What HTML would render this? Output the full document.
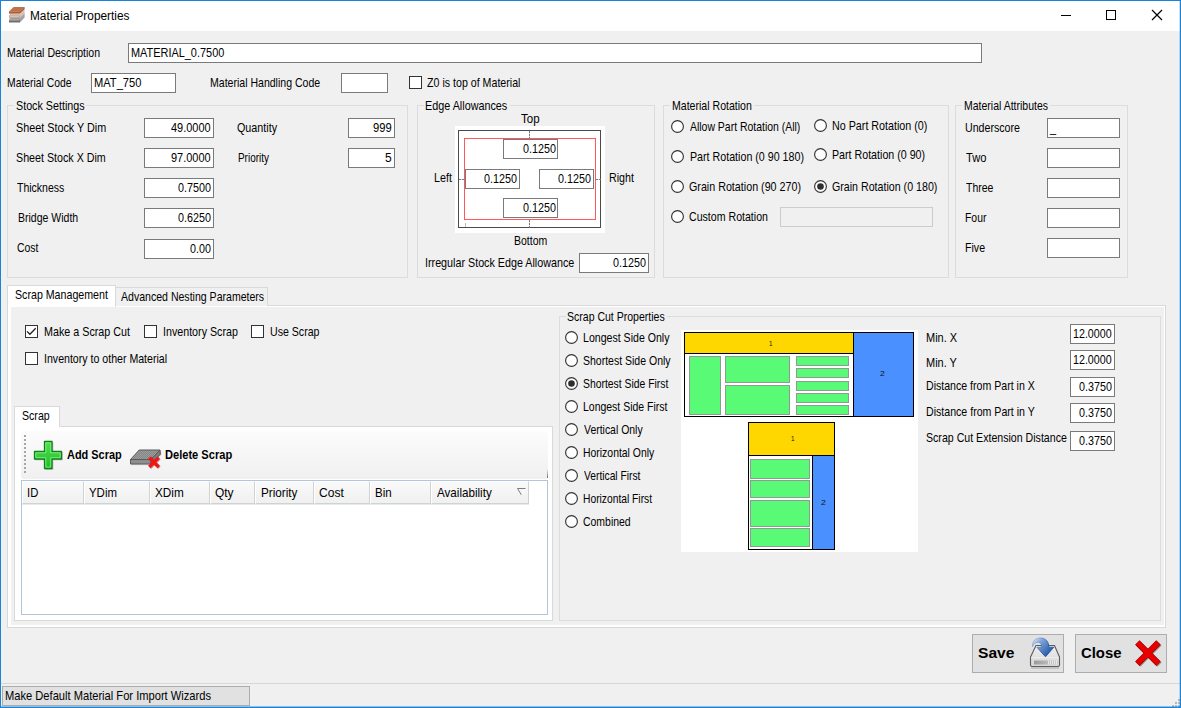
<!DOCTYPE html>
<html><head><meta charset="utf-8"><title>Material Properties</title>
<style>
html,body{margin:0;padding:0}
body{width:1181px;height:708px;overflow:hidden;background:#f0f0f0;position:relative;font-family:'Liberation Sans',sans-serif}
.t{position:absolute;white-space:pre;transform-origin:0 0;color:#000}
.tb{position:absolute;box-sizing:border-box;background:#fff;border:1px solid #7a7a7a}
.tbd{position:absolute;box-sizing:border-box;background:#f0f0f0;border:1px solid #ccc}
.gb{position:absolute;box-sizing:border-box;border:1px solid #dcdcdc}
.gap{position:absolute;background:#f0f0f0}
.rs{position:absolute}
.cb{position:absolute;box-sizing:border-box;width:13px;height:13px;border:1px solid #333;background:#fff}
.pane{position:absolute;box-sizing:border-box;border:1px solid #d9d9d9;background:#fff}
.page{position:absolute;background:#f0f0f0}
.tab{position:absolute;box-sizing:border-box;border:1px solid #d9d9d9;border-bottom:none;background:#f0f0f0}
.tab.act{background:#fff}
.tool{position:absolute;background:linear-gradient(#fcfcfc,#f0f0f0);border-radius:3px}
.grip{position:absolute;width:2px;height:38px;background:repeating-linear-gradient(#a6a6a6 0,#a6a6a6 2px,transparent 2px,transparent 4px)}
.grid{position:absolute;box-sizing:border-box;border:1px solid #b3c5da;background:#fff}
.hd{position:absolute;box-sizing:border-box;background:linear-gradient(#f9f9f9,#f0f0f0);border-right:1px solid #d2d2d2;border-bottom:1px solid #cfd3d3;border-left:1px solid #fff;border-top:1px solid #fdfdfd;box-shadow:0 1px 0 #e4e9ea}
.btn{position:absolute;box-sizing:border-box;background:#e1e1e1;border:1px solid #adadad}
</style></head>
<body>
<div id="w0" style="position:absolute;left:0;top:0;width:1181px;height:708px;background:#f0f0f0"></div>
<div style="position:absolute;left:0;top:0;width:1181px;height:31px;background:#fff"></div>
<div class="tb" style="left:128px;top:43px;width:854px;height:20px;"></div>
<div class="tb" style="left:91px;top:73px;width:85px;height:20px;"></div>
<div class="tb" style="left:341px;top:73px;width:47px;height:20px;"></div>
<div class="cb" style="left:409px;top:76px"></div>
<div class="gb" style="left:7px;top:105px;width:401px;height:173px"></div>
<div class="gap" style="left:14px;top:105px;width:72px;height:1px"></div>
<div class="gb" style="left:417px;top:105px;width:238px;height:173px"></div>
<div class="gap" style="left:424px;top:105px;width:86px;height:1px"></div>
<div class="gb" style="left:663px;top:105px;width:286px;height:173px"></div>
<div class="gap" style="left:670px;top:105px;width:84px;height:1px"></div>
<div class="gb" style="left:955px;top:105px;width:173px;height:173px"></div>
<div class="gap" style="left:962px;top:105px;width:88px;height:1px"></div>
<div class="tb" style="left:144px;top:118px;width:70px;height:20px;"></div>
<div class="tb" style="left:144px;top:148px;width:70px;height:20px;"></div>
<div class="tb" style="left:144px;top:178px;width:70px;height:20px;"></div>
<div class="tb" style="left:144px;top:208px;width:70px;height:20px;"></div>
<div class="tb" style="left:144px;top:239px;width:70px;height:20px;"></div>
<div class="tb" style="left:348px;top:118px;width:47px;height:20px;"></div>
<div class="tb" style="left:348px;top:148px;width:47px;height:20px;"></div>
<div style="position:absolute;left:455px;top:126px;width:150px;height:107px;background:#fff"></div>
<div style="position:absolute;left:458px;top:130px;width:143px;height:98px;border:1px solid #4a4a4a;box-sizing:border-box"></div>
<div style="position:absolute;left:464px;top:138px;width:132px;height:82px;border:1px solid #ff5a5a;box-sizing:border-box"></div>
<div style="position:absolute;left:529px;top:131px;width:1px;height:7px;background:repeating-linear-gradient(#777 0,#777 2px,#ddd 2px,#ddd 3px)"></div>
<div style="position:absolute;left:529px;top:220px;width:1px;height:8px;background:repeating-linear-gradient(#777 0,#777 2px,#ddd 2px,#ddd 3px)"></div>
<div style="position:absolute;left:459px;top:179px;width:5px;height:1px;background:repeating-linear-gradient(90deg,#777 0,#777 2px,#ddd 2px,#ddd 3px)"></div>
<div style="position:absolute;left:596px;top:179px;width:5px;height:1px;background:repeating-linear-gradient(90deg,#777 0,#777 2px,#ddd 2px,#ddd 3px)"></div>
<div style="position:absolute;left:465px;top:223px;width:1px;height:4px;background:#bbb"></div>
<div class="tb" style="left:503px;top:139px;width:55px;height:20px;"></div>
<div class="tb" style="left:465px;top:169px;width:55px;height:20px;"></div>
<div class="tb" style="left:539px;top:169px;width:55px;height:20px;"></div>
<div class="tb" style="left:503px;top:198px;width:55px;height:20px;"></div>
<div class="tb" style="left:579px;top:253px;width:70px;height:20px;"></div>
<svg class="rs" style="left:671px;top:120px" width="13" height="13" viewBox="0 0 13 13"><circle cx="6.5" cy="6.5" r="5.9" fill="#fff" stroke="#333" stroke-width="1.15"/></svg>
<svg class="rs" style="left:671px;top:150px" width="13" height="13" viewBox="0 0 13 13"><circle cx="6.5" cy="6.5" r="5.9" fill="#fff" stroke="#333" stroke-width="1.15"/></svg>
<svg class="rs" style="left:671px;top:180px" width="13" height="13" viewBox="0 0 13 13"><circle cx="6.5" cy="6.5" r="5.9" fill="#fff" stroke="#333" stroke-width="1.15"/></svg>
<svg class="rs" style="left:671px;top:210px" width="13" height="13" viewBox="0 0 13 13"><circle cx="6.5" cy="6.5" r="5.9" fill="#fff" stroke="#333" stroke-width="1.15"/></svg>
<svg class="rs" style="left:814px;top:119px" width="13" height="13" viewBox="0 0 13 13"><circle cx="6.5" cy="6.5" r="5.9" fill="#fff" stroke="#333" stroke-width="1.15"/></svg>
<svg class="rs" style="left:814px;top:148px" width="13" height="13" viewBox="0 0 13 13"><circle cx="6.5" cy="6.5" r="5.9" fill="#fff" stroke="#333" stroke-width="1.15"/></svg>
<svg class="rs" style="left:814px;top:180px" width="13" height="13" viewBox="0 0 13 13"><circle cx="6.5" cy="6.5" r="5.9" fill="#fff" stroke="#333" stroke-width="1.15"/><circle cx="6.5" cy="6.5" r="3.3" fill="#2e2e2e"/></svg>
<div class="tbd" style="left:780px;top:207px;width:153px;height:20px;"></div>
<div class="tb" style="left:1047px;top:118px;width:73px;height:20px;"></div>
<div class="tb" style="left:1047px;top:148px;width:73px;height:20px;"></div>
<div class="tb" style="left:1047px;top:178px;width:73px;height:20px;"></div>
<div class="tb" style="left:1047px;top:208px;width:73px;height:20px;"></div>
<div class="tb" style="left:1047px;top:238px;width:73px;height:20px;"></div>
<div class="pane" style="left:7px;top:305px;width:1159px;height:323px"></div>
<div class="page" style="left:11px;top:307px;width:1153px;height:318px"></div>
<div class="tab" style="left:115px;top:287px;width:153px;height:19px"></div>
<div class="tab act" style="left:7px;top:285px;width:109px;height:22px"></div>
<div class="cb" style="left:25px;top:325px"><svg width="13" height="13" viewBox="0 0 13 13" style="position:absolute;left:-1px;top:-1px"><path d="M2.0 6.4 L4.9 9.3 L10.7 3.2" fill="none" stroke="#222" stroke-width="1.3"/></svg></div>
<div class="cb" style="left:144px;top:325px"></div>
<div class="cb" style="left:251px;top:325px"></div>
<div class="cb" style="left:25px;top:352px"></div>
<div class="pane" style="left:14px;top:426px;width:539px;height:195px"></div>
<div class="tab act" style="left:14px;top:406px;width:46px;height:21px"></div>
<div class="tool" style="left:21px;top:431px;width:527px;height:48px"></div>
<div style="position:absolute;left:547px;top:469px;width:1px;height:9px;background:linear-gradient(rgba(90,90,90,0),rgba(90,90,90,.9))"></div>
<div class="grip" style="left:24px;top:435px"></div>
<div class="grid" style="left:21px;top:480px;width:527px;height:135px"></div>
<div class="hd" style="left:22px;top:481px;width:62px;height:23px"></div>
<div class="hd" style="left:84px;top:481px;width:66px;height:23px"></div>
<div class="hd" style="left:150px;top:481px;width:60px;height:23px"></div>
<div class="hd" style="left:210px;top:481px;width:45px;height:23px"></div>
<div class="hd" style="left:255px;top:481px;width:59px;height:23px"></div>
<div class="hd" style="left:314px;top:481px;width:56px;height:23px"></div>
<div class="hd" style="left:370px;top:481px;width:61px;height:23px"></div>
<div class="hd" style="left:431px;top:481px;width:98px;height:23px"></div>
<svg style="position:absolute;left:517px;top:488px" width="9" height="8" viewBox="0 0 9 8"><path d="M8.5 0.5 L4.5 7" fill="none" stroke="#fff" stroke-width="1"/><path d="M8.5 0.5 H0.5 L4.3 6.8" fill="none" stroke="#7d7d7d" stroke-width="1"/></svg>
<div class="gb" style="left:559px;top:316px;width:602px;height:305px"></div>
<div class="gap" style="left:566px;top:316px;width:101px;height:1px"></div>
<svg class="rs" style="left:565px;top:331px" width="13" height="13" viewBox="0 0 13 13"><circle cx="6.5" cy="6.5" r="5.9" fill="#fff" stroke="#333" stroke-width="1.15"/></svg>
<svg class="rs" style="left:565px;top:354px" width="13" height="13" viewBox="0 0 13 13"><circle cx="6.5" cy="6.5" r="5.9" fill="#fff" stroke="#333" stroke-width="1.15"/></svg>
<svg class="rs" style="left:565px;top:377px" width="13" height="13" viewBox="0 0 13 13"><circle cx="6.5" cy="6.5" r="5.9" fill="#fff" stroke="#333" stroke-width="1.15"/><circle cx="6.5" cy="6.5" r="3.3" fill="#2e2e2e"/></svg>
<svg class="rs" style="left:565px;top:400px" width="13" height="13" viewBox="0 0 13 13"><circle cx="6.5" cy="6.5" r="5.9" fill="#fff" stroke="#333" stroke-width="1.15"/></svg>
<svg class="rs" style="left:565px;top:423px" width="13" height="13" viewBox="0 0 13 13"><circle cx="6.5" cy="6.5" r="5.9" fill="#fff" stroke="#333" stroke-width="1.15"/></svg>
<svg class="rs" style="left:565px;top:446px" width="13" height="13" viewBox="0 0 13 13"><circle cx="6.5" cy="6.5" r="5.9" fill="#fff" stroke="#333" stroke-width="1.15"/></svg>
<svg class="rs" style="left:565px;top:469px" width="13" height="13" viewBox="0 0 13 13"><circle cx="6.5" cy="6.5" r="5.9" fill="#fff" stroke="#333" stroke-width="1.15"/></svg>
<svg class="rs" style="left:565px;top:492px" width="13" height="13" viewBox="0 0 13 13"><circle cx="6.5" cy="6.5" r="5.9" fill="#fff" stroke="#333" stroke-width="1.15"/></svg>
<svg class="rs" style="left:565px;top:515px" width="13" height="13" viewBox="0 0 13 13"><circle cx="6.5" cy="6.5" r="5.9" fill="#fff" stroke="#333" stroke-width="1.15"/></svg>
<div class="tb" style="left:1070px;top:324px;width:45px;height:20px;"></div>
<div class="tb" style="left:1070px;top:350px;width:45px;height:20px;"></div>
<div class="tb" style="left:1070px;top:377px;width:45px;height:20px;"></div>
<div class="tb" style="left:1070px;top:403px;width:45px;height:20px;"></div>
<div class="tb" style="left:1070px;top:431px;width:45px;height:20px;"></div>
<svg style="position:absolute;left:681px;top:330px" width="237" height="222" viewBox="0 0 237 222"><rect width="237" height="222" fill="#fff"/><rect x="3.5" y="2.5" width="229" height="84" fill="#fff" stroke="#000" stroke-width="1"/><rect x="3.5" y="2.5" width="169" height="21" fill="#ffd700" stroke="#000" stroke-width="1"/><rect x="172.5" y="2.5" width="60" height="84" fill="#4a90ff" stroke="#000" stroke-width="1"/><rect x="8.5" y="26.5" width="31" height="58" fill="#59fb76" stroke="#8f9a92" stroke-width="1"/><rect x="44.5" y="26.5" width="64" height="26" fill="#59fb76" stroke="#8f9a92" stroke-width="1"/><rect x="44.5" y="55.5" width="64" height="29" fill="#59fb76" stroke="#8f9a92" stroke-width="1"/><rect x="115.5" y="26.5" width="52" height="9" fill="#59fb76" stroke="#8f9a92" stroke-width="1"/><rect x="115.5" y="38.5" width="52" height="9" fill="#59fb76" stroke="#8f9a92" stroke-width="1"/><rect x="115.5" y="51.5" width="52" height="9" fill="#59fb76" stroke="#8f9a92" stroke-width="1"/><rect x="115.5" y="63.5" width="52" height="9" fill="#59fb76" stroke="#8f9a92" stroke-width="1"/><rect x="115.5" y="75.5" width="52" height="9" fill="#59fb76" stroke="#8f9a92" stroke-width="1"/><rect x="67.5" y="92.5" width="86" height="127" fill="#fff" stroke="#000" stroke-width="1"/><rect x="67.5" y="92.5" width="86" height="33" fill="#ffd700" stroke="#000" stroke-width="1"/><rect x="131.5" y="125.5" width="22" height="94" fill="#4a90ff" stroke="#000" stroke-width="1"/><rect x="69.5" y="129.5" width="59" height="19" fill="#59fb76" stroke="#8f9a92" stroke-width="1"/><rect x="69.5" y="150.5" width="59" height="17" fill="#59fb76" stroke="#8f9a92" stroke-width="1"/><rect x="69.5" y="170.5" width="59" height="26" fill="#59fb76" stroke="#8f9a92" stroke-width="1"/><rect x="69.5" y="198.5" width="59" height="18" fill="#59fb76" stroke="#8f9a92" stroke-width="1"/></svg>
<div class="btn" style="left:972px;top:634px;width:92px;height:39px"></div><div class="btn" style="left:1075px;top:634px;width:92px;height:39px"></div>
<div style="position:absolute;left:1px;top:683px;width:1179px;height:1px;background:#d7d7d7"></div><div class="btn" style="left:2px;top:686px;width:248px;height:20px"></div>
<div style="position:absolute;left:1178px;top:699px;width:2px;height:2px;background:#b8b8b8"></div>
<div style="position:absolute;left:1175px;top:702px;width:2px;height:2px;background:#b8b8b8"></div>
<div style="position:absolute;left:1178px;top:702px;width:2px;height:2px;background:#b8b8b8"></div>
<div style="position:absolute;left:1172px;top:705px;width:2px;height:2px;background:#b8b8b8"></div>
<div style="position:absolute;left:1175px;top:705px;width:2px;height:2px;background:#b8b8b8"></div>
<div style="position:absolute;left:1178px;top:705px;width:2px;height:2px;background:#b8b8b8"></div>
<!-- title bar icon -->
<svg style="position:absolute;left:9px;top:7px" width="16" height="16" viewBox="0 0 16 16">
<polygon points="11,6.5 15.6,1.8 15.6,6.2 11,10.8" fill="#c8ad98" opacity=".72"/>
<polygon points="11,10.8 15.6,6.2 15.6,10.6 11,15.4" fill="#808080" opacity=".72"/>
<rect x="0.8" y="6.6" width="10.2" height="1.7" fill="#d6bfac"/>
<rect x="0" y="8.4" width="11" height="2.3" fill="#b39079"/>
<rect x="0.3" y="9" width="10" height="0.8" fill="#e2d0c2"/>
<rect x="0.8" y="10.8" width="10.2" height="1.7" fill="#9c9c9c"/>
<rect x="0" y="12.6" width="11" height="2.9" fill="#6f6f6f"/>
<rect x="0.3" y="13.2" width="10" height="0.8" fill="#999"/>
<polygon points="4.6,0 15.6,0 11,4.5 0,4.5" fill="#c0714a"/>
<rect x="0" y="4.4" width="11" height="2.2" fill="#ad5c37"/>
<polygon points="11,4.4 15.6,0 15.6,2 11,6.6" fill="#9e5532"/>
</svg>
<!-- title bar buttons -->
<div style="position:absolute;left:1061px;top:15px;width:10px;height:1px;background:#000"></div>
<div style="position:absolute;left:1106px;top:10px;width:10px;height:10px;box-sizing:border-box;border:1px solid #000"></div>
<svg style="position:absolute;left:1151px;top:9px" width="12" height="12" viewBox="0 0 12 12"><path d="M1 1 L11 11 M11 1 L1 11" stroke="#000" stroke-width="1.2" fill="none"/></svg>
<!-- add (green plus) -->
<svg style="position:absolute;left:33px;top:440px" width="30" height="30" viewBox="0 0 30 30">
<defs><linearGradient id="gp" x1="0" y1="0" x2="0" y2="1"><stop offset="0" stop-color="#4fe04f"/><stop offset="1" stop-color="#1fbd2a"/></linearGradient></defs>
<path d="M11.5 1.5 H19.5 V11.5 H29 V19.5 H19.5 V29 H11.5 V19.5 H1.5 V11.5 H11.5 Z" transform="translate(0.8,0.8)" fill="rgba(0,0,0,.25)"/>
<path d="M11.5 1.5 H19 V11.5 H28.5 V19 H19 V28.5 H11.5 V19 H1.5 V11.5 H11.5 Z" fill="url(#gp)" stroke="#0f7f18" stroke-width="1.3" stroke-linejoin="round"/>
<path d="M12.8 2.8 H17.7 V12.8 H27.2 V17.7 H17.7 V27.2 H12.8 V17.7 H2.8 V12.8 H12.8 Z" fill="none" stroke="#86ee86" stroke-width="1" opacity=".85"/>
</svg>
<!-- delete (slab + red x) -->
<svg style="position:absolute;left:129px;top:448px" width="34" height="24" viewBox="0 0 34 24">
<defs><pattern id="chk" width="2" height="2" patternUnits="userSpaceOnUse"><rect width="2" height="2" fill="#9c9c9c"/><rect width="1" height="1" fill="#868686"/><rect x="1" y="1" width="1" height="1" fill="#868686"/></pattern></defs>
<polygon points="10.5,2 31.5,2 31.5,6.5 22,16.5 1.5,16.5 1.5,11.5" fill="rgba(0,0,0,.12)" transform="translate(0.8,0.8)"/>
<polygon points="10.2,2 31,2 22,11.5 1.5,11.5" fill="url(#chk)" stroke="#5a5a5a" stroke-width="1" stroke-linejoin="round"/>
<polygon points="1.5,11.5 22,11.5 22,16 1.5,16" fill="#8e8e8e" stroke="#5a5a5a" stroke-width="1" stroke-linejoin="round"/>
<polygon points="22,11.5 31,2 31.4,6.2 22,16" fill="#7c7c7c" stroke="#5a5a5a" stroke-width="1" stroke-linejoin="round"/>
<path d="M20.3 9.6 L29.7 19 M29.7 9.6 L20.3 19" stroke="rgba(60,0,0,.35)" stroke-width="3.6" transform="translate(0.7,0.7)"/>
<path d="M20.3 9.6 L29.7 19 M29.7 9.6 L20.3 19" stroke="#f41414" stroke-width="3.4"/>
</svg>
<!-- save (drive + arrow) -->
<svg style="position:absolute;left:1028px;top:636px" width="34" height="34" viewBox="0 0 34 34">
<defs>
<linearGradient id="dv" x1="0" y1="0" x2="0" y2="1"><stop offset="0" stop-color="#efefef"/><stop offset="1" stop-color="#d6d6d6"/></linearGradient>
<linearGradient id="sl" x1="0" y1="0" x2="1" y2="0"><stop offset="0" stop-color="#9a9a9a"/><stop offset="1" stop-color="#cfcfcf"/></linearGradient>
<linearGradient id="ar" x1="0" y1="0.2" x2="0.75" y2="0.8"><stop offset="0" stop-color="#cfdcf0"/><stop offset="0.3" stop-color="#7fa6da"/><stop offset="1" stop-color="#2c5fae"/></linearGradient><linearGradient id="ars" x1="0" y1="0.2" x2="0.6" y2="0.6"><stop offset="0" stop-color="#9db8df"/><stop offset="1" stop-color="#28559c"/></linearGradient>
</defs>
<path d="M3 32 H31" stroke="rgba(0,0,0,.18)" stroke-width="1.5"/>
<path d="M8 9.5 H26.5 L31.5 21 V29 Q31.5 30.5 30 30.5 H4 Q2.5 30.5 2.5 29 V21 Z" fill="url(#dv)" stroke="#5c5c5c" stroke-width="1.1" stroke-linejoin="round"/>
<path d="M3.2 21.5 H30.8" stroke="#fff" stroke-width="1" opacity=".45"/>
<rect x="6" y="24.5" width="24" height="4" fill="url(#sl)"/>
<path d="M20.5 24.5 V28.5 M22.5 24.5 V28.5 M24.5 24.5 V28.5 M26.5 24.5 V28.5 M28.5 24.5 V28.5" stroke="#e8e8e8" stroke-width="1"/>
<path d="M4.5 10.5 C4 4 9 1.8 13 2 C18.5 2.3 20.8 6.5 20.8 11.2 H25.8 L17.5 20.8 L8.8 11.2 H13.8 C13.8 8 12.5 6.5 10.5 6.3 C7.5 6 5.5 8 4.5 10.5 Z" fill="url(#ar)" stroke="url(#ars)" stroke-width=".9" stroke-linejoin="round"/>
</svg>
<!-- close (red X) -->
<svg style="position:absolute;left:1133px;top:636px" width="32" height="32" viewBox="0 0 32 32">
<path d="M4.3 6.5 L25.5 27.7 M25.5 6.5 L4.3 27.7" stroke="rgba(40,40,40,.45)" stroke-width="6" transform="translate(0.9,0.9)"/>
<path d="M4.3 6.5 L25.5 27.7 M25.5 6.5 L4.3 27.7" stroke="#a00000" stroke-width="6.3"/>
<path d="M4.6 6.8 L25.2 27.4 M25.2 6.8 L4.6 27.4" stroke="#e80000" stroke-width="5.1"/>
</svg>

<span class="t" style="left:29.7px;top:9.8px;font-size:12px;line-height:12px;transform:scaleX(0.9877);">Material Properties</span>
<span class="t" style="left:6.7px;top:46.0px;font-size:13px;line-height:13px;transform:scaleX(0.8102);">Material Description</span>
<span class="t" style="left:130.6px;top:46.0px;font-size:13px;line-height:13px;transform:scaleX(0.8400);">MATERIAL_0.7500</span>
<span class="t" style="left:6.7px;top:76.0px;font-size:13px;line-height:13px;transform:scaleX(0.7966);">Material Code</span>
<span class="t" style="left:93.6px;top:76.0px;font-size:13px;line-height:13px;transform:scaleX(0.8550);">MAT_750</span>
<span class="t" style="left:209.5px;top:76.0px;font-size:13px;line-height:13px;transform:scaleX(0.8109);">Material Handling Code</span>
<span class="t" style="left:427.1px;top:76.0px;font-size:13px;line-height:13px;transform:scaleX(0.8188);">Z0 is top of Material</span>
<span class="t" style="left:15.6px;top:99.0px;font-size:13px;line-height:13px;transform:scaleX(0.8263);">Stock Settings</span>
<span class="t" style="left:15.5px;top:121.0px;font-size:13px;line-height:13px;transform:scaleX(0.8300);">Sheet Stock Y Dim</span>
<span class="t" style="left:16.4px;top:151.0px;font-size:13px;line-height:13px;transform:scaleX(0.8228);">Sheet Stock X Dim</span>
<span class="t" style="left:17.1px;top:181.0px;font-size:13px;line-height:13px;transform:scaleX(0.8072);">Thickness</span>
<span class="t" style="left:17.7px;top:211.0px;font-size:13px;line-height:13px;transform:scaleX(0.8086);">Bridge Width</span>
<span class="t" style="left:16.9px;top:241.0px;font-size:13px;line-height:13px;transform:scaleX(0.8032);">Cost</span>
<span class="t" style="left:171.2px;top:121.0px;font-size:13px;line-height:13px;transform:scaleX(0.8441);">49.0000</span>
<span class="t" style="left:171.2px;top:151.0px;font-size:13px;line-height:13px;transform:scaleX(0.8441);">97.0000</span>
<span class="t" style="left:177.9px;top:181.0px;font-size:13px;line-height:13px;transform:scaleX(0.8285);">0.7500</span>
<span class="t" style="left:177.9px;top:211.0px;font-size:13px;line-height:13px;transform:scaleX(0.8285);">0.6250</span>
<span class="t" style="left:189.9px;top:242.0px;font-size:13px;line-height:13px;transform:scaleX(0.8275);">0.00</span>
<span class="t" style="left:236.8px;top:121.0px;font-size:13px;line-height:13px;transform:scaleX(0.8276);">Quantity</span>
<span class="t" style="left:237.7px;top:151.0px;font-size:13px;line-height:13px;transform:scaleX(0.7632);">Priority</span>
<span class="t" style="left:373.2px;top:121.0px;font-size:13px;line-height:13px;transform:scaleX(0.8604);">999</span>
<span class="t" style="left:385.2px;top:151.0px;font-size:13px;line-height:13px;transform:scaleX(0.9225);">5</span>
<span class="t" style="left:425.4px;top:99.0px;font-size:13px;line-height:13px;transform:scaleX(0.8309);">Edge Allowances</span>
<span class="t" style="left:521.4px;top:112.0px;font-size:13px;line-height:13px;transform:scaleX(0.8845);">Top</span>
<span class="t" style="left:433.5px;top:171.0px;font-size:13px;line-height:13px;transform:scaleX(0.8242);">Left</span>
<span class="t" style="left:608.5px;top:171.0px;font-size:13px;line-height:13px;transform:scaleX(0.8193);">Right</span>
<span class="t" style="left:513.7px;top:234.0px;font-size:13px;line-height:13px;transform:scaleX(0.8079);">Bottom</span>
<span class="t" style="left:425.1px;top:256.0px;font-size:13px;line-height:13px;transform:scaleX(0.8263);">Irregular Stock Edge Allowance</span>
<span class="t" style="left:522.8px;top:142.0px;font-size:13px;line-height:13px;transform:scaleX(0.8285);">0.1250</span>
<span class="t" style="left:484.4px;top:172.0px;font-size:13px;line-height:13px;transform:scaleX(0.8285);">0.1250</span>
<span class="t" style="left:558.4px;top:172.0px;font-size:13px;line-height:13px;transform:scaleX(0.8285);">0.1250</span>
<span class="t" style="left:522.8px;top:201.0px;font-size:13px;line-height:13px;transform:scaleX(0.8285);">0.1250</span>
<span class="t" style="left:612.9px;top:256.0px;font-size:13px;line-height:13px;transform:scaleX(0.8285);">0.1250</span>
<span class="t" style="left:671.5px;top:99.0px;font-size:13px;line-height:13px;transform:scaleX(0.8127);">Material Rotation</span>
<span class="t" style="left:690.2px;top:120.0px;font-size:13px;line-height:13px;transform:scaleX(0.8038);">Allow Part Rotation (All)</span>
<span class="t" style="left:689.5px;top:150.0px;font-size:13px;line-height:13px;transform:scaleX(0.8214);">Part Rotation (0 90 180)</span>
<span class="t" style="left:688.6px;top:180.0px;font-size:13px;line-height:13px;transform:scaleX(0.8242);">Grain Rotation (90 270)</span>
<span class="t" style="left:688.6px;top:210.0px;font-size:13px;line-height:13px;transform:scaleX(0.8156);">Custom Rotation</span>
<span class="t" style="left:832.3px;top:119.0px;font-size:13px;line-height:13px;transform:scaleX(0.8250);">No Part Rotation (0)</span>
<span class="t" style="left:832.3px;top:148.0px;font-size:13px;line-height:13px;transform:scaleX(0.8204);">Part Rotation (0 90)</span>
<span class="t" style="left:831.7px;top:180.0px;font-size:13px;line-height:13px;transform:scaleX(0.8192);">Grain Rotation (0 180)</span>
<span class="t" style="left:963.8px;top:99.0px;font-size:13px;line-height:13px;transform:scaleX(0.8071);">Material Attributes</span>
<span class="t" style="left:965.4px;top:121.0px;font-size:13px;line-height:13px;transform:scaleX(0.8180);">Underscore</span>
<span class="t" style="left:966.1px;top:151.0px;font-size:13px;line-height:13px;transform:scaleX(0.8575);">Two</span>
<span class="t" style="left:966.1px;top:181.0px;font-size:13px;line-height:13px;transform:scaleX(0.8050);">Three</span>
<span class="t" style="left:965.4px;top:211.0px;font-size:13px;line-height:13px;transform:scaleX(0.7995);">Four</span>
<span class="t" style="left:965.4px;top:241.0px;font-size:13px;line-height:13px;transform:scaleX(0.8173);">Five</span>
<span class="t" style="left:1049.9px;top:121.0px;font-size:13px;line-height:13px;transform:scaleX(0.8396);">_</span>
<span class="t" style="left:14.9px;top:288.0px;font-size:13px;line-height:13px;transform:scaleX(0.8186);">Scrap Management</span>
<span class="t" style="left:120.8px;top:290.0px;font-size:13px;line-height:13px;transform:scaleX(0.8119);">Advanced Nesting Parameters</span>
<span class="t" style="left:43.6px;top:325.0px;font-size:13px;line-height:13px;transform:scaleX(0.8263);">Make a Scrap Cut</span>
<span class="t" style="left:162.5px;top:325.0px;font-size:13px;line-height:13px;transform:scaleX(0.8224);">Inventory Scrap</span>
<span class="t" style="left:269.7px;top:325.0px;font-size:13px;line-height:13px;transform:scaleX(0.8150);">Use Scrap</span>
<span class="t" style="left:43.6px;top:352.0px;font-size:13px;line-height:13px;transform:scaleX(0.8149);">Inventory to other Material</span>
<span class="t" style="left:21.5px;top:409.0px;font-size:13px;line-height:13px;transform:scaleX(0.8147);">Scrap</span>
<span class="t" style="left:67.2px;top:448.8px;font-size:12px;line-height:12px;transform:scaleX(0.9115);font-weight:bold;">Add Scrap</span>
<span class="t" style="left:164.8px;top:448.8px;font-size:12px;line-height:12px;transform:scaleX(0.9240);font-weight:bold;">Delete Scrap</span>
<span class="t" style="left:26.9px;top:486.0px;font-size:13px;line-height:13px;transform:scaleX(0.8672);">ID</span>
<span class="t" style="left:89.2px;top:486.0px;font-size:13px;line-height:13px;transform:scaleX(0.8793);">YDim</span>
<span class="t" style="left:154.5px;top:486.0px;font-size:13px;line-height:13px;transform:scaleX(0.9054);">XDim</span>
<span class="t" style="left:215.0px;top:486.0px;font-size:13px;line-height:13px;transform:scaleX(0.9179);">Qty</span>
<span class="t" style="left:260.5px;top:486.0px;font-size:13px;line-height:13px;transform:scaleX(0.9016);">Priority</span>
<span class="t" style="left:319.1px;top:486.0px;font-size:13px;line-height:13px;transform:scaleX(0.9267);">Cost</span>
<span class="t" style="left:375.4px;top:486.0px;font-size:13px;line-height:13px;transform:scaleX(0.8871);">Bin</span>
<span class="t" style="left:436.8px;top:486.0px;font-size:13px;line-height:13px;transform:scaleX(0.8947);">Availability</span>
<span class="t" style="left:567.2px;top:310.0px;font-size:13px;line-height:13px;transform:scaleX(0.8094);">Scrap Cut Properties</span>
<span class="t" style="left:583.3px;top:331.0px;font-size:13px;line-height:13px;transform:scaleX(0.8140);">Longest Side Only</span>
<span class="t" style="left:583.3px;top:354.0px;font-size:13px;line-height:13px;transform:scaleX(0.8079);">Shortest Side Only</span>
<span class="t" style="left:583.3px;top:377.0px;font-size:13px;line-height:13px;transform:scaleX(0.7984);">Shortest Side First</span>
<span class="t" style="left:583.3px;top:400.0px;font-size:13px;line-height:13px;transform:scaleX(0.8052);">Longest Side First</span>
<span class="t" style="left:584.0px;top:423.0px;font-size:13px;line-height:13px;transform:scaleX(0.8035);">Vertical Only</span>
<span class="t" style="left:583.3px;top:446.0px;font-size:13px;line-height:13px;transform:scaleX(0.8020);">Horizontal Only</span>
<span class="t" style="left:584.0px;top:469.0px;font-size:13px;line-height:13px;transform:scaleX(0.7893);">Vertical First</span>
<span class="t" style="left:583.3px;top:492.0px;font-size:13px;line-height:13px;transform:scaleX(0.7901);">Horizontal First</span>
<span class="t" style="left:582.6px;top:515.0px;font-size:13px;line-height:13px;transform:scaleX(0.8044);">Combined</span>
<span class="t" style="left:925.5px;top:331.0px;font-size:13px;line-height:13px;transform:scaleX(0.8434);">Min. X</span>
<span class="t" style="left:925.5px;top:356.0px;font-size:13px;line-height:13px;transform:scaleX(0.8433);">Min. Y</span>
<span class="t" style="left:925.5px;top:379.0px;font-size:13px;line-height:13px;transform:scaleX(0.8138);">Distance from Part in X</span>
<span class="t" style="left:925.5px;top:405.0px;font-size:13px;line-height:13px;transform:scaleX(0.8153);">Distance from Part in Y</span>
<span class="t" style="left:925.5px;top:431.0px;font-size:13px;line-height:13px;transform:scaleX(0.8157);">Scrap Cut Extension Distance</span>
<span class="t" style="left:1073.1px;top:327.0px;font-size:13px;line-height:13px;transform:scaleX(0.8229);">12.0000</span>
<span class="t" style="left:1073.1px;top:353.0px;font-size:13px;line-height:13px;transform:scaleX(0.8229);">12.0000</span>
<span class="t" style="left:1079.0px;top:380.0px;font-size:13px;line-height:13px;transform:scaleX(0.8285);">0.3750</span>
<span class="t" style="left:1079.0px;top:406.0px;font-size:13px;line-height:13px;transform:scaleX(0.8285);">0.3750</span>
<span class="t" style="left:1079.0px;top:434.0px;font-size:13px;line-height:13px;transform:scaleX(0.8285);">0.3750</span>
<span class="t" style="left:978.2px;top:646.1px;font-size:14px;line-height:14px;transform:scaleX(1.1122);font-weight:bold;">Save</span>
<span class="t" style="left:1080.5px;top:646.1px;font-size:14px;line-height:14px;transform:scaleX(1.0616);font-weight:bold;">Close</span>
<span class="t" style="left:4.7px;top:689.0px;font-size:13px;line-height:13px;transform:scaleX(0.8562);">Make Default Material For Import Wizards</span>
<span class="t" style="left:769.3px;top:340.1px;font-size:7px;line-height:7px;transform:scaleX(0.8924);color:#111;">1</span>
<span class="t" style="left:880.0px;top:370.1px;font-size:7px;line-height:7px;transform:scaleX(1.2252);color:#111;">2</span>
<span class="t" style="left:790.8px;top:435.1px;font-size:7px;line-height:7px;transform:scaleX(0.8924);color:#111;">1</span>
<span class="t" style="left:820.5px;top:499.1px;font-size:7px;line-height:7px;transform:scaleX(1.2252);color:#111;">2</span>
<div style="position:absolute;left:0;top:0;width:1181px;height:1px;background:#1883d7"></div>
<div style="position:absolute;left:0;top:0;width:1px;height:708px;background:#1883d7"></div>
<div style="position:absolute;left:1180px;top:0;width:1px;height:708px;background:#1883d7"></div>
<div style="position:absolute;left:1179px;top:0;width:1px;height:708px;background:rgba(24,131,215,.25)"></div>
<div style="position:absolute;left:0;top:707px;width:1181px;height:1px;background:#1883d7"></div>
<div style="position:absolute;left:0;top:706px;width:1181px;height:1px;background:rgba(24,131,215,.45)"></div>
</body></html>
